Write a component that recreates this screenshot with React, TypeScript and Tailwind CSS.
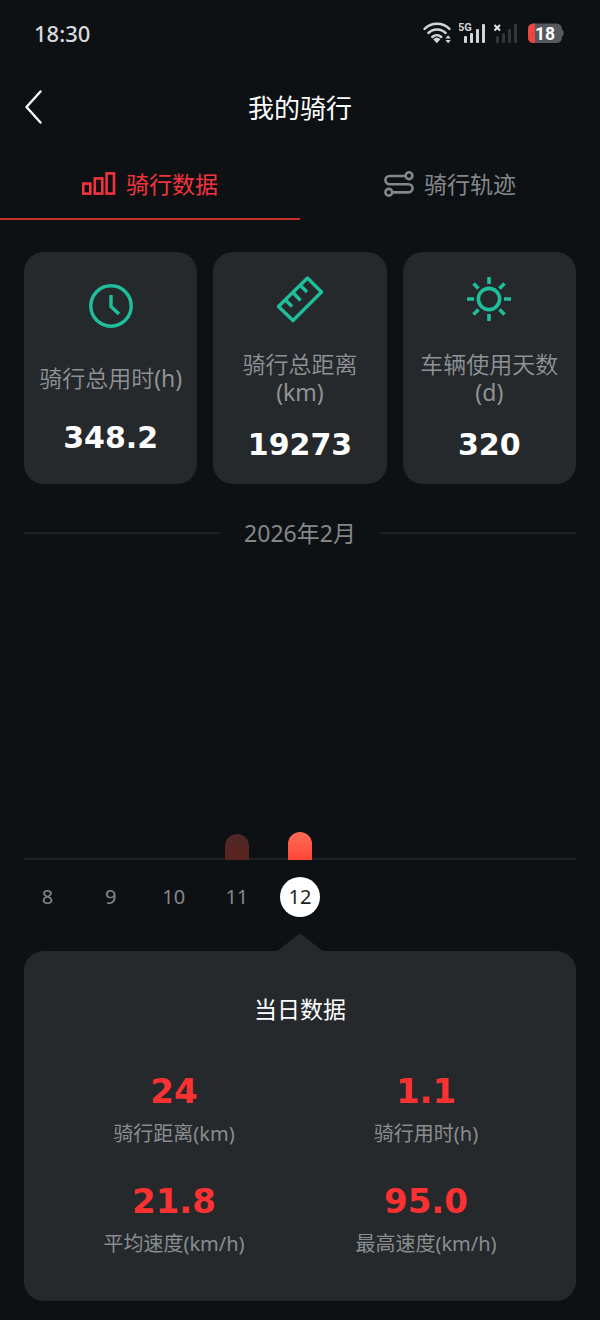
import { useState } from 'react';
import type { ReactNode } from 'react';

interface DayRide {
  day: number;
  bar: number;
}

interface Metric {
  label: string;
  value: string;
}

const days: DayRide[] = [
  { day: 8, bar: 0 },
  { day: 9, bar: 0 },
  { day: 10, bar: 0 },
  { day: 11, bar: 26 },
  { day: 12, bar: 28 },
];

const dayMetrics: Metric[] = [
  { label: '骑行距离(km)', value: '24' },
  { label: '骑行用时(h)', value: '1.1' },
  { label: '平均速度(km/h)', value: '21.8' },
  { label: '最高速度(km/h)', value: '95.0' },
];

const StatusBar = () => (
  <div className="flex h-[66px] items-center justify-between pr-[35px] pl-[34px]">
    <span className="text-[22px] font-medium text-[#d8dadc]">18:30</span>
    <div className="flex items-center gap-2">
      <svg width="28" height="22" viewBox="0 0 28 22" fill="none" stroke="#d3d5d7" strokeWidth="2.5" strokeLinecap="round">
        <path d="M1.6 6.8a18 18 0 0 1 24.8 0" />
        <path d="M5.4 11a12.4 12.4 0 0 1 17.2 0" />
        <path d="M9.3 15a6.8 6.8 0 0 1 9 0" />
        <path d="M10.2 17.2a5.4 5.4 0 0 1 7.2 0L13.8 21.2z" fill="#d3d5d7" stroke="none" />
        <path d="M22.4 16.4l2.7-3.2 2.7 3.2zM22.4 18l2.7 3.2 2.7-3.2z" fill="#d3d5d7" stroke="none" />
      </svg>
      <svg width="27" height="22" viewBox="0 0 27 22" fill="#d3d5d7">
        <text x="-1" y="9" fontSize="11" fontWeight="700" fontFamily="Roboto, sans-serif">5G</text>
        <rect x="5" y="14" width="3" height="7" rx="1" />
        <rect x="11" y="11" width="3" height="10" rx="1" />
        <rect x="17" y="7" width="3" height="14" rx="1" />
        <rect x="23" y="2" width="3" height="19" rx="1" />
      </svg>
      <svg width="25" height="22" viewBox="0 0 25 22" fill="#323639">
        <path d="M0.5 3l5.500 5.500M6 3l-5.500 5.500" stroke="#e4e6e8" strokeWidth="2" />
        <rect x="2" y="14" width="3" height="7" rx="1" />
        <rect x="8" y="11" width="3" height="10" rx="1" />
        <rect x="14" y="7" width="3" height="14" rx="1" />
        <rect x="20" y="2" width="3" height="19" rx="1" />
      </svg>
      <svg width="38" height="22" viewBox="0 0 38 22">
        <path d="M34.5 7.5c3 .6 3 6.4 0 7z" fill="#56595c" />
        <rect x="1" y="1.5" width="34" height="19.5" rx="5.5" fill="#56595c" />
        <path d="M8 1.5H6.5a5.5 5.5 0 0 0-5.5 5.5v8.5a5.5 5.5 0 0 0 5.5 5.5h1.5z" fill="#f0443e" />
        <text x="18" y="17.5" fontSize="17.5" fontWeight="700" fill="#fff" textAnchor="middle" fontFamily="Roboto, sans-serif">18</text>
      </svg>
    </div>
  </div>
);

const ChartIcon = () => (
  <svg width="34" height="26" viewBox="0 0 34 26" fill="none" stroke="currentColor" strokeWidth="2.6">
    <rect x="1.3" y="12.6" width="7" height="10" />
    <rect x="12.8" y="7.4" width="7.5" height="15.2" />
    <rect x="24.6" y="2.4" width="7.4" height="20.2" />
  </svg>
);

const RouteIcon = () => (
  <svg width="30" height="26" viewBox="0 0 30 26" fill="none" stroke="currentColor" strokeWidth="2.6">
    <circle cx="25" cy="4.7" r="3.4" />
    <circle cx="4.8" cy="21.3" r="3.4" />
    <path d="M21.4 5H5.5a4 4 0 0 0 0 8.200H24.5a4 4 0 0 1 0 8.200H8.4" />
  </svg>
);

const ClockIcon = () => (
  <svg width="44" height="44" viewBox="0 0 44 44" fill="none" stroke="currentColor" strokeWidth="3.4">
    <circle cx="22" cy="22" r="20.2" />
    <path d="M22 11v11.5l8 7.5" />
  </svg>
);

const RulerIcon = () => (
  <svg width="48" height="48" viewBox="0 0 48 48" fill="none" stroke="currentColor" strokeWidth="3.4" strokeLinejoin="round">
    <path d="M2.5 31.5L31.5 3L45.5 17L17 45.5z" />
    <path d="M9.5 25l6.5 6.5M17 17.5l7.5 8M24.5 10.5l6.5 6.5" />
  </svg>
);

const SunIcon = () => (
  <svg width="44" height="44" viewBox="0 0 44 44" fill="none" stroke="currentColor" strokeWidth="3.6">
    <circle cx="22" cy="22" r="10.6" />
    <path d="M22 0v7M22 37v7M0 22h7M37 22h7M6.5 6.5l5 5M32.5 32.5l5 5M37.5 6.5l-5 5M11.5 32.5l-5 5" />
  </svg>
);

const StatCard = ({ icon, label, unit, value }: { icon: ReactNode; label: string; unit: string; value: string }) => (
  <div className="flex min-h-[232px] flex-col items-center justify-evenly rounded-[20px] bg-[#25292c] px-3 pt-1 text-center">
    <div className="mb-2 flex h-11 items-center text-[#1fbf9c]">{icon}</div>
    <p className="text-[23px] leading-7 font-[350] text-[#909396]">
      {label}
      <wbr />
      <span className="font-normal">{unit}</span>
    </p>
    <p className="font-['DejaVu_Sans',sans-serif] text-[30px] leading-9 font-bold text-white">{value}</p>
  </div>
);

export default function App() {
  const [tab, setTab] = useState('data');
  const [selected, setSelected] = useState(12);

  const tabClass = (active: boolean) =>
    active
      ? 'flex h-[70px] cursor-pointer items-center justify-center gap-2.5 border-b-2 border-[#c9302c] text-[23px] text-[#f4333c]'
      : 'flex h-[70px] cursor-pointer items-center justify-center gap-2.5 border-b-2 border-transparent text-[23px] text-[#84878a]';

  return (
    <div className="min-h-screen bg-[#0d1114] pb-[18px] font-['Noto_Sans','Noto_Sans_CJK_SC',sans-serif] text-white">
      <StatusBar />

      <header className="grid h-[84px] grid-cols-[72px_1fr_72px] items-center">
        <button aria-label="返回" className="flex h-12 cursor-pointer items-center pl-6">
          <svg width="20" height="36" viewBox="0 0 20 36" fill="none" stroke="#fff" strokeWidth="2.4" strokeLinecap="round" strokeLinejoin="round">
            <path d="M16.5 1.5L2.5 17l14 15.5" />
          </svg>
        </button>
        <h1 className="text-center text-[26px]">我的骑行</h1>
      </header>

      <nav className="grid grid-cols-2">
        <button className={tabClass(tab === 'data')} onClick={() => setTab('data')}>
          <ChartIcon />
          骑行数据
        </button>
        <button className={tabClass(tab === 'track')} onClick={() => setTab('track')}>
          <RouteIcon />
          骑行轨迹
        </button>
      </nav>

      <section className="mx-6 mt-8 grid grid-cols-3 gap-4">
        <StatCard icon={<ClockIcon />} label="骑行总用时" unit="(h)" value="348.2" />
        <StatCard icon={<RulerIcon />} label="骑行总距离" unit="(km)" value="19273" />
        <StatCard icon={<SunIcon />} label="车辆使用天数" unit="(d)" value="320" />
      </section>

      <div className="mx-6 mt-[33px] flex items-center gap-6">
        <div className="h-0.5 flex-1 bg-[#1d2124]" />
        <h2 className="text-[23px] leading-8 text-[#84878a]">2026年2月</h2>
        <div className="h-0.5 flex-1 bg-[#1d2124]" />
      </div>

      <section>
        <div className="relative z-10 grid h-[311px] grid-cols-9 items-end justify-items-center px-4">
          {days.map(({ day, bar }) => (
            <div
              key={day}
              className={
                day === selected
                  ? 'w-6 rounded-t-full bg-linear-to-b from-[#ff6a55] to-[#ff4636]'
                  : 'w-6 rounded-t-full bg-linear-to-b from-[#4f2826] to-[#5a2320]'
              }
              style={{ height: bar }}
            />
          ))}
        </div>
        <div className="mx-6 -mt-0.5 h-0.5 bg-[#1d2124]" />
        <div className="mt-[17px] grid grid-cols-9 justify-items-center px-4">
          {days.map(({ day }) => (
            <button
              key={day}
              onClick={() => setSelected(day)}
              className={
                day === selected
                  ? 'size-10 cursor-pointer rounded-full bg-white text-xl text-[#1c1e20]'
                  : 'size-10 cursor-pointer rounded-full text-xl text-[#84878a]'
              }
            >
              {day}
            </button>
          ))}
        </div>
      </section>

      <section className="mx-6 mt-4 flex flex-col items-center">
        <svg width="48" height="18" viewBox="0 0 48 18" fill="#25292c">
          <path d="M0 18C4 17 6 14 9 12L22 1.7q2-1.5 4 0L39 12c3 2 5 5 9 6z" />
        </svg>
        <div className="w-full rounded-[20px] bg-[#25292c] px-6 pt-[42px] pb-10 text-center">
          <h2 className="text-[23px] leading-8">当日数据</h2>
          <div className="mt-11 grid grid-cols-2 gap-y-7">
            {dayMetrics.map(({ label, value }) => (
              <div key={label}>
                <p className="font-['DejaVu_Sans',sans-serif] text-[34px] leading-[44px] font-bold text-[#fb3132]">{value}</p>
                <p className="mt-1 text-xl leading-[34px] text-[#8a8d90]">{label}</p>
              </div>
            ))}
          </div>
        </div>
      </section>
    </div>
  );
}
